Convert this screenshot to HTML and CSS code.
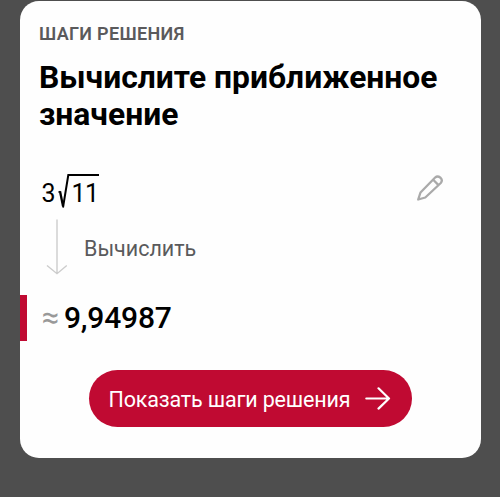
FILE: index.html
```html
<!DOCTYPE html>
<html lang="ru">
<head>
<meta charset="utf-8">
<title>Шаги решения</title>
<link rel="stylesheet" href="styles.css">
</head>
<body>
<main class="card">
  <div class="label">ШАГИ РЕШЕНИЯ</div>
  <h1 class="title">Вычислите приближенное<br>значение</h1>
  <div class="expression">
    <span class="coef">3</span>
    <svg class="radical" width="13" height="36" viewBox="0 0 13 36" fill="none" stroke="#000"><path d="M.3 19.2 2.3 18.3" stroke-width="1.2"/><path d="M2 18.3 5 33" stroke-width="2.3"/><path d="M5 34.5 10.3 2H13" stroke-width="2"/></svg>
    <span class="radicand">11</span>
    <svg class="edit" width="28" height="28" viewBox="0 0 28 28" fill="none" stroke="#aaa" stroke-width="2.3" stroke-linejoin="round"><path d="M2.2 25.5 4.5 18.5 19.4 3.3Q21.5 1.5 24.5 3.7 27 6.5 24.8 9L9.3 23.5ZM17.2 5.7 22.5 11.1"/></svg>
  </div>
  <div class="step">
    <svg width="22" height="56" viewBox="0 0 22 56" fill="none" stroke="#ccc" stroke-width="1.4"><path d="M11 .5V54.5M1 46.5 11 54.7 20.8 46.5"/></svg>
    <span class="step-name">Вычислить</span>
  </div>
  <div class="result">
    <span class="approx">≈</span><span class="value">9,94987</span>
  </div>
  <button class="button" type="button">
    <span class="button-text">Показать шаги решения</span>
    <svg width="26" height="24" viewBox="0 0 26 24" fill="none" stroke="#fff" stroke-width="2.2" stroke-linecap="round" stroke-linejoin="round"><path d="M1.3 12.5H24M13.5 2.3 24 12.5 13.5 22.6"/></svg>
  </button>
</main>
</body>
</html>
```
FILE: styles.css
```css
* { box-sizing: border-box; }
body {
  margin: 0;
  padding-top: .5px;
  height: 497px;
  overflow: hidden;
  background: #4e4e4e;
  font-family: Roboto, "Liberation Sans", sans-serif;
}
.card {
  width: 461px;
  height: 457px;
  margin: 0 auto;
  padding: 22px 0 0;
  border-radius: 19px;
  background: #fefefe;
  white-space: nowrap;
}
.label {
  margin-left: 19.5px;
  font-size: 18px;
  line-height: 22px;
  font-weight: 600;
  letter-spacing: .32px;
  color: #5a5a5c;
}
.title {
  margin: 14px 0 0 19.5px;
  font-size: 31.8px;
  line-height: 37.5px;
  font-weight: 700;
  color: #000;
}
.expression {
  display: flex;
  margin: 40px 37px 0 22px;
  height: 40px;
  font-size: 25px;
  line-height: 36px;
}
.coef {
  width: 16px;
  line-height: 39px;
}
.radical { margin-top: -1px; }
.radicand {
  width: 28px;
  height: 36px;
  padding-left: 1px;
  border-top: 2px solid #000;
  line-height: 35px;
  letter-spacing: -.6px;
}
.edit { margin: 0 0 0 auto; }
.step {
  display: flex;
  align-items: center;
  margin: 5px 0 0 26px;
  height: 56px;
}
.step-name {
  margin: 3px 0 0 16.5px;
  font-size: 21.5px;
  color: #5a5a5c;
}
.result {
  display: flex;
  align-items: center;
  height: 46px;
  margin-top: 20px;
  padding-left: 15px;
  border-left: 7px solid #c00a32;
}
.approx {
  width: 22.5px;
  font-size: 31px;
  color: #999;
}
.value {
  font-size: 30px;
  font-weight: 500;
  letter-spacing: -.2px;
}
.button {
  display: flex;
  align-items: center;
  justify-content: space-between;
  width: 323px;
  height: 57px;
  margin: 29px 0 0 69px;
  padding: 0 21px 0 20px;
  border: 0;
  border-radius: 29px;
  background: #c00a32;
  color: #fff;
  font: 400 21.5px Roboto, "Liberation Sans", sans-serif;
}
.button-text {
  padding-top: 2px;
  letter-spacing: -.17px;
}
```
